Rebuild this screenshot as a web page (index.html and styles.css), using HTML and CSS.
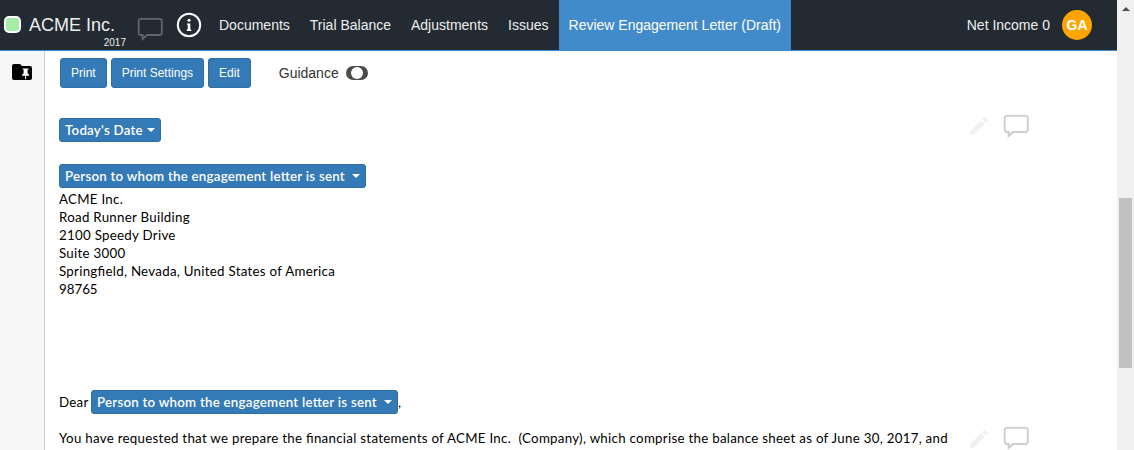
FILE: index.html
```
<!DOCTYPE html>
<html lang="en">
<head>
<meta charset="utf-8">
<title>Review Engagement Letter (Draft)</title>
<link rel="stylesheet" href="styles.css">
</head>
<body>
<svg class="symbols" aria-hidden="true">
  <symbol id="comment" viewBox="0 0 26 24"><path d="M3.9 1.8H22.500Q24.800 1.8 24.800 4V15.800Q24.800 18 22.500 18H10L5.600 22V18H3.900Q1.700 18 1.700 15.800V4Q1.700 1.800 3.900 1.800Z" fill="none" stroke="currentColor" stroke-width="1.800"/></symbol>
  <symbol id="pencil" viewBox="3 3 18 18"><path d="M3 17.25V21h3.75L17.81 9.94l-3.75-3.75L3 17.25zM20.71 7.04a1 1 0 0 0 0-1.41l-2.34-2.34a1 1 0 0 0-1.41 0l-1.83 1.83 3.75 3.75 1.83-1.83z" fill="currentColor"/></symbol>
</svg>
<div class="app">
  <div class="page">
    <header class="topbar">
      <span class="status"></span>
      <div class="client"><span class="client-name">ACME Inc.</span><span class="client-year">2017</span></div>
      <svg class="top-comment"><use href="#comment"/></svg>
      <svg class="info" viewBox="0 0 26 26"><circle cx="13" cy="13" r="11.2" fill="none" stroke="#fff" stroke-width="2"/><circle cx="13" cy="8.300" r="1.500" fill="#fff"/><path d="M11 11.400h3.300v6.200h1v1.300h-4.600v-1.300h1v-4.900h-.7z" fill="#fff"/></svg>
      <nav class="nav">
        <a>Documents</a><a>Trial Balance</a><a>Adjustments</a><a>Issues</a><a class="active">Review Engagement Letter (Draft)</a>
      </nav>
      <span class="income">Net Income 0</span>
      <span class="avatar">GA</span>
    </header>
    <div class="body">
      <aside class="rail">
        <svg class="folder" viewBox="0 0 20 16"><path d="M2 0h6l2 2h8q2 0 2 2v10q0 2-2 2H2q-2 0-2-2V2q0-2 2-2z" fill="#000"/><path d="M10.600 4.500h6v1h-1v3.700l1.500 1.500v1h-3v3l-.5 1-.5-1v-3h-3v-1l1.500-1.500V5.500h-1z" fill="#fff"/></svg>
      </aside>
      <main class="content">
        <div class="toolbar">
          <button class="btn">Print</button><button class="btn">Print Settings</button><button class="btn">Edit</button>
          <span class="guidance">Guidance</span><span class="toggle"><i></i></span>
        </div>
        <section class="row first">
          <div class="text">
            <div class="line"><span class="field date"><b>Today's Date</b><i class="caret"></i></span></div>
            <div class="line recipient"><span class="field person"><b>Person to whom the engagement letter is sent</b><i class="caret"></i></span></div>
            <address>ACME Inc.<br>Road Runner Building<br>2100 Speedy Drive<br>Suite 3000<br>Springfield, Nevada, United States of America<br><span class="zip">98765</span></address>
            <div class="line dear"><span class="word">Dear</span><span class="field person"><b>Person to whom the engagement letter is sent</b><i class="caret"></i></span><span>,</span></div>
          </div>
          <div class="actions"><svg class="pencil"><use href="#pencil"/></svg><svg class="comment"><use href="#comment"/></svg></div>
        </section>
        <section class="row second">
          <p class="text">You have requested that we prepare the financial statements of ACME Inc.&nbsp; (Company), which comprise the balance sheet as of June 30, 2017, and</p>
          <div class="actions"><svg class="pencil"><use href="#pencil"/></svg><svg class="comment"><use href="#comment"/></svg></div>
        </section>
      </main>
    </div>
  </div>
  <div class="scrollbar"><span class="arrow"></span><span class="thumb"></span></div>
</div>
</body>
</html>
```
FILE: styles.css
```
* { box-sizing: border-box; }
body { margin: 0; overflow: hidden; background: #fff; font: 14px/20px "Liberation Sans", Arial, sans-serif; }
svg { display: block; flex: none; }
.symbols { display: none; }
.app { display: flex; width: 1134px; height: 450px; overflow: hidden; }
.page { display: flex; flex-direction: column; width: 1117px; height: 450px; }

.topbar { display: flex; flex: none; height: 51px; background: #232a32; border-bottom: 1px solid #428bca; color: #eee; }
.status { width: 17px; height: 17px; margin: 16px 8px 0 4px; border: 2px solid #fff; border-radius: 5px; background: #a5eda5; }
.client { display: flex; flex-direction: column; width: 97px; padding-top: 13px; }
.client-name { font-size: 18px; line-height: 24px; white-space: nowrap; }
.client-year { font-size: 10px; line-height: 12px; align-self: flex-end; }
.top-comment { width: 26px; height: 24px; margin: 17px 0 0 11px; color: #62666b; }
.info { width: 26px; height: 26px; margin: 12px 0 0 13px; }
.nav { display: flex; margin-left: 7px; }
.nav a { padding: 15px 10px; white-space: nowrap; }
.nav .active { background: #428bca; color: #fff; }
.income { margin: 15px 12px 0 auto; }
.avatar { width: 30px; height: 30px; margin: 10px 25px 0 0; border-radius: 50%; background: #ffa500; color: #fff; font-weight: bold; line-height: 30px; text-align: center; }

.body { display: flex; flex: 1; min-height: 0; }
.rail { width: 45px; border-right: 1px solid #ccc; background: #f7f7f7; padding: 13px 0 0 12px; }
.folder { width: 20px; height: 16px; }
.content { flex: 1; min-width: 0; padding-left: 14px; overflow: hidden; }
.toolbar { display: flex; height: 67px; padding: 7px 0 0 1px; }
.btn { height: 30px; margin: 0 4px 0 0; padding: 0 10px; border: 1px solid #2e6da4; border-radius: 3px; background: #337ab7; color: #fff; font: 12px/18px "Liberation Sans", Arial, sans-serif; }
.guidance { margin: 5px 7px 0 24px; color: #333; }
.toggle { display: flex; justify-content: center; align-items: center; width: 22px; height: 14px; margin-top: 8px; border-radius: 7px; background: #4c4c4c; }
.toggle i { width: 12px; height: 12px; border-radius: 50%; background: #fff; }

.row { display: flex; font: 13.3px/18px Lato, sans-serif; letter-spacing: 0.28px; font-feature-settings: "liga" 1; color: #000; }
.row .text { width: 911px; margin: 0; white-space: nowrap; }
.line { display: flex; align-items: center; height: 24px; }
.field { display: flex; align-items: center; justify-content: space-between; height: 24px; padding: 0 5px; border: 1px solid #2e6da4; border-radius: 3px; background: #337ab7; color: #fff; }
.field b { font-weight: 600; letter-spacing: 0.24px; }
.date { width: 102px; }
.person { width: 307px; }
.caret { border: 4px solid transparent; border-top-color: #fff; border-bottom: 0; }
.recipient { margin-top: 22px; }
address { margin-top: 2px; font-style: normal; }
.zip { letter-spacing: 0; }
.dear { margin-top: 92px; }
.word { width: 32px; }
.actions { display: flex; }
.pencil { width: 18px; height: 18px; color: #f1f1f1; }
.comment { width: 26px; height: 24px; margin-left: 15px; color: #ccc; }
.first .pencil { margin-top: -1px; }
.first .comment { margin-top: -4px; }
.second { margin-top: 15px; }
.second .pencil { margin-top: 1px; }
.second .comment { margin-top: -3px; }

.scrollbar { width: 17px; background: #f0f0f0; }
.arrow { display: block; width: 8px; margin: 7px 0 0 5px; border: 4px solid transparent; border-top: 0; border-bottom-color: #505050; }
.thumb { display: block; width: 13px; height: 170px; margin: 187px 0 0 2px; background: #c1c1c1; }
```
